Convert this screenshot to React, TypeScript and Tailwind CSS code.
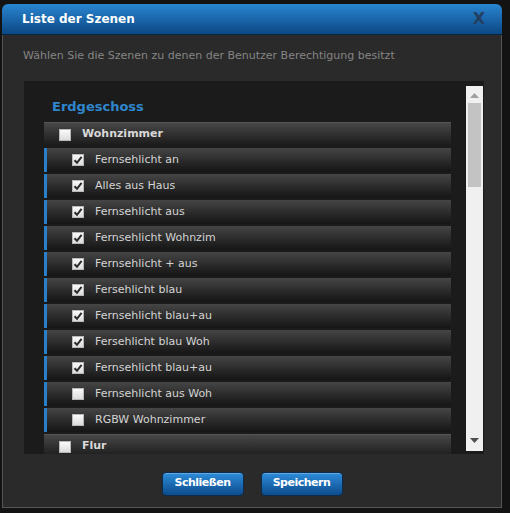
import React from "react";

type Szene = { name: string; checked: boolean };

const szenen: Szene[] = [
  { name: "Fernsehlicht an", checked: true },
  { name: "Alles aus Haus", checked: true },
  { name: "Fernsehlicht aus", checked: true },
  { name: "Fernsehlicht Wohnzim", checked: true },
  { name: "Fernsehlicht + aus", checked: true },
  { name: "Fersehlicht blau", checked: true },
  { name: "Fernsehlicht blau+au", checked: true },
  { name: "Fersehlicht blau Woh", checked: true },
  { name: "Fernsehlicht blau+au", checked: true },
  { name: "Fernsehlicht aus Woh", checked: false },
  { name: "RGBW Wohnzimmer", checked: false },
];

const CheckBox = ({ checked }: { checked: boolean }) => (
  <span className="flex h-[12px] w-[12px] shrink-0 items-center justify-center border border-[#b8b8b8] bg-linear-to-b from-[#fafafa] to-[#dcdcdc]">
    {checked && (
      <svg width="10" height="10" viewBox="0 0 10 10">
        <path d="M1.5 5.2 L4 7.8 L8.6 1.8" fill="none" stroke="#2b2b2b" strokeWidth="2" />
      </svg>
    )}
  </span>
);

const GroupRow = ({ label }: { label: string }) => (
  <div className="flex h-[24px] items-center gap-[11px] border-t border-[#555] bg-linear-to-b from-[#474747] to-[#1a1a1a] pl-[15px] mb-[2px]">
    <CheckBox checked={false} />
    <span className="text-[11px] font-bold text-[#d8d8d8]">{label}</span>
  </div>
);

const SceneRow = ({ szene }: { szene: Szene }) => (
  <div className="flex h-[24px] items-center gap-[11px] border-l-[3px] border-[#2a7fc9] bg-linear-to-b from-[#464646] to-[#151515] pl-[25px] mb-[2px]">
    <CheckBox checked={szene.checked} />
    <span className="text-[11px] text-[#d4d4d4]">{szene.name}</span>
  </div>
);

const BlueButton = ({ children }: { children: React.ReactNode }) => (
  <button className="h-[24px] w-[82px] rounded-[4px] border border-[#0b2c4e] bg-linear-to-b from-[#2e8ddb] to-[#0c4c8c] text-[11px] font-bold tracking-[-0.5px] text-white shadow-[inset_0_1px_0_rgba(255,255,255,0.25)]">
    {children}
  </button>
);

export default function App() {
  return (
    <div className="h-[513px] w-[510px] overflow-hidden bg-[#131313] pl-[2px] pt-[4px] font-['DejaVu_Sans',sans-serif]">
      <div className="flex h-[504px] w-[500px] flex-col">
        <div className="flex h-[31px] shrink-0 items-center justify-between rounded-t-[6px] border-b border-[#0a2540] bg-linear-to-b from-[#2a86d2] to-[#0c4885] pl-[20px] pr-[17px]">
          <span className="text-[12px] font-bold text-white">Liste der Szenen</span>
          <span className="text-[16px] font-bold text-[#243f60]">X</span>
        </div>
        <div className="flex flex-1 flex-col border border-t-0 border-[#545454] bg-[#2a2a2a]">
          <p className="pl-[20px] pt-[13px] text-[11px] text-[#858585]">
            Wählen Sie die Szenen zu denen der Benutzer Berechtigung besitzt
          </p>
          <div className="ml-[21px] mt-[16px] flex h-[373px] w-[460px] bg-[#1b1b1b]">
            <div className="flex-1 overflow-hidden pl-[20px] pt-[16px]">
              <div className="mb-[6px] pl-[8px] text-[13px] font-bold text-[#2f86cc]">Erdgeschoss</div>
              <div className="w-[407px]">
                <GroupRow label="Wohnzimmer" />
                {szenen.map((s, i) => (
                  <SceneRow key={i} szene={s} />
                ))}
                <GroupRow label="Flur" />
              </div>
            </div>
            <div className="mb-[3px] mr-[1px] mt-[5px] flex w-[17px] flex-col items-center bg-[#f0f0f0]">
              <svg className="mt-[7px]" width="9" height="5" viewBox="0 0 9 5">
                <path d="M0 5 L4.5 0 L9 5 Z" fill="#a0a0a0" />
              </svg>
              <div className="mt-[5px] h-[84px] w-[13px] bg-[#c3c3c3]" />
              <div className="flex-1" />
              <svg className="mb-[8px]" width="9" height="5" viewBox="0 0 9 5">
                <path d="M0 0 L9 0 L4.5 5 Z" fill="#505050" />
              </svg>
            </div>
          </div>
          <div className="mt-[18px] flex justify-center gap-[17px]">
            <BlueButton>Schließen</BlueButton>
            <BlueButton>Speichern</BlueButton>
          </div>
        </div>
      </div>
    </div>
  );
}
